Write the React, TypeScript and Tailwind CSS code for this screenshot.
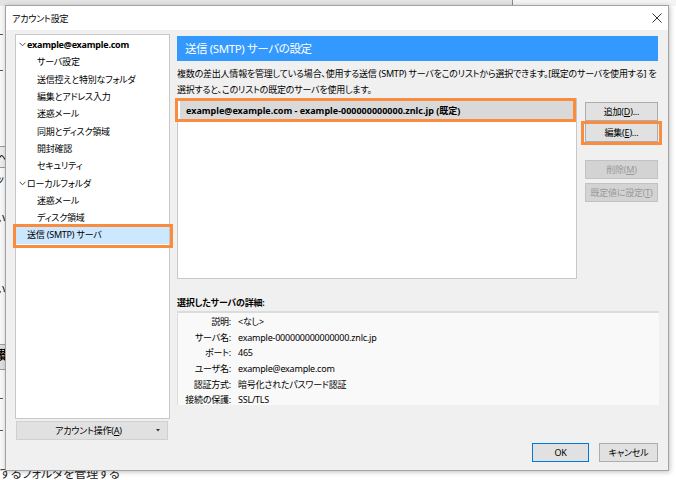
import type { ReactNode } from "react";

type TreeItem = {
  label: string;
  level: 0 | 1;
  bold?: boolean;
  chevron?: boolean;
  selected?: boolean;
};

const tree: TreeItem[] = [
  { label: "example@example.com", level: 0, bold: true, chevron: true },
  { label: "サーバ設定", level: 1 },
  { label: "送信控えと特別なフォルダ", level: 1 },
  { label: "編集とアドレス入力", level: 1 },
  { label: "迷惑メール", level: 1 },
  { label: "同期とディスク領域", level: 1 },
  { label: "開封確認", level: 1 },
  { label: "セキュリティ", level: 1 },
  { label: "ローカルフォルダ", level: 0, chevron: true },
  { label: "迷惑メール", level: 1 },
  { label: "ディスク領域", level: 1 },
  { label: "送信 (SMTP) サーバ", level: 0, selected: true },
];

const details: [string, string][] = [
  ["説明:", "<なし>"],
  ["サーバ名:", "example-000000000000000.znlc.jp"],
  ["ポート:", "465"],
  ["ユーザ名:", "example@example.com"],
  ["認証方式:", "暗号化されたパスワード認証"],
  ["接続の保護:", "SSL/TLS"],
];

function Chevron() {
  return (
    <svg width="7" height="5" viewBox="0 0 7 5" className="shrink-0">
      <path d="M0.5 0.8 L3.5 3.8 L6.5 0.8" fill="none" stroke="#4a4a4a" strokeWidth="1" />
    </svg>
  );
}

function Highlight({ className }: { className: string }) {
  return <span className={`pointer-events-none absolute border-[3px] border-[#f98c3f] ${className}`} />;
}

function SideButton({ children, disabled }: { children: ReactNode; disabled?: boolean }) {
  return (
    <div
      className={
        disabled
          ? "flex h-[19px] w-[73px] items-center justify-center border border-[#c2c2c2] bg-[#d3d3d3] text-[#9a9a9a]"
          : "flex h-[19px] w-[73px] items-center justify-center border border-[#adadad] bg-[#e1e1e1]"
      }
    >
      {children}
    </div>
  );
}

export default function App() {
  return (
    <div className="relative h-[480px] w-[676px] overflow-hidden bg-white font-['Noto_Sans','Noto_Sans_CJK_JP',sans-serif] text-[9px] leading-none tracking-[-0.22px] text-black [font-feature-settings:'palt']">
      {/* window behind the dialog */}
      <div className="flex h-[6px]">
        <div className="w-[513px] border-r border-[#8c8c8c] bg-[#e4e4e4]" />
        <div className="flex-1 bg-[#f4f4f4]" />
      </div>
      <div className="absolute left-0 top-[6px] h-[466px] w-[5px] bg-[#f7f7f7]">
        <span className="absolute left-0 top-[28px] h-px w-[3px] bg-[#555]" />
        <span className="absolute left-0 top-[64px] h-px w-[3px] bg-[#555]" />
        <span className="absolute left-0 top-[140px] h-[22px] w-[5px] border-y border-[#9a9a9a] bg-[#ececec]" />
        <span className="absolute left-[-3px] top-[146px] text-[11px]">へ</span>
        <span className="absolute left-[-4px] top-[168px] text-[10px]">ッ</span>
        <span className="absolute left-[-5px] top-[207px] text-[11px]">い</span>
        <span className="absolute left-[-5px] top-[278px] text-[11px]">い</span>
        <span className="absolute left-0 top-[338px] h-[26px] w-[5px] border-y border-[#9a9a9a] bg-[#dedede]" />
        <span className="absolute left-[-5px] top-[344px] text-[12px] font-bold">讃</span>
        <span className="absolute left-0 top-[392px] h-px w-[3px] bg-[#555]" />
        <span className="absolute left-0 top-[424px] h-px w-[3px] bg-[#555]" />
      </div>
      <div className="absolute left-0 top-[467px] text-[12px] leading-[14px] tracking-normal text-[#222]">
        するフォルダを管理する
      </div>

      {/* dialog */}
      <div className="absolute left-[5px] top-[5px] flex h-[466px] w-[664px] flex-col border border-[#a3a3a3] bg-[#f0f0f0] shadow-[1px_1px_5px_rgba(0,0,0,0.25)]">
        <div className="flex h-[24px] items-center justify-between bg-white pl-[6px] pr-[6px]">
          <span>アカウント設定</span>
          <svg width="10" height="10" viewBox="0 0 10 10">
            <path d="M0.5 0.5 L9.5 9.5 M9.5 0.5 L0.5 9.5" stroke="#333" strokeWidth="1" />
          </svg>
        </div>

        <div className="flex gap-[7px] pl-[9px] pt-[4px]">
          {/* left column */}
          <div className="flex w-[155px] flex-col">
            <div className="h-[385px] border border-[#c8c8c8] bg-white py-px">
              {tree.map((item, i) => (
                <div
                  key={i}
                  className={`relative flex h-[17.3px] items-center ${item.selected ? "bg-[#cce8ff]" : ""} ${
                    item.level === 0 ? "pl-[3px]" : "pl-[21px]"
                  }`}
                >
                  {item.level === 0 && (
                    <span className="flex w-[8px] items-center">{item.chevron && <Chevron />}</span>
                  )}
                  <span className={`whitespace-nowrap ${item.bold ? "font-bold" : ""}`}>{item.label}</span>
                  {item.selected && <Highlight className="-bottom-[4px] -left-[3px] -right-[4px] -top-[2px]" />}
                </div>
              ))}
            </div>
            <div className="ml-px mt-[2px] flex h-[19px] w-[152px] items-center border border-[#d0d0d0] bg-[#e1e1e1]">
              <span className="flex-1 pl-[4px] text-center">
                アカウント操作(<u>A</u>)
              </span>
              <svg width="4" height="3" viewBox="0 0 4 3" className="mr-[7px]">
                <path d="M0 0 H4 L2 2.5 Z" fill="#333" />
              </svg>
            </div>
          </div>

          {/* right column */}
          <div className="mt-[2px] flex w-[481px] flex-col">
            <div className="flex h-[25px] items-center bg-[#3399ff] pl-[8px] text-[11.5px] tracking-[-0.4px] text-white">
              送信 (SMTP) サーバの設定
            </div>
            <p className="mt-[5px] whitespace-nowrap leading-[16px]">
              複数の差出人情報を管理している場合、使用する送信 (SMTP) サーバをこのリストから選択できます。[既定のサーバを使用する] を
              <br />
              選択すると、このリストの既定のサーバを使用します。
            </p>

            <div className="flex gap-[8px]">
              <div className="h-[181px] w-[400px] border border-[#c8c8c8] bg-white p-[2px]">
                <div className="relative flex h-[18px] items-center bg-[#d9d9d9] pl-[6px] font-bold tracking-normal">
                  example@example.com - example-000000000000.znlc.jp (既定)
                  <Highlight className="-bottom-[3px] -left-[5px] -right-[2px] -top-[3px]" />
                </div>
              </div>
              <div className="flex flex-col pt-[4px]">
                <SideButton>
                  追加(<u>D</u>)...
                </SideButton>
                <div className="relative mt-[2px]">
                  <SideButton>
                    編集(<u>E</u>)...
                  </SideButton>
                  <Highlight className="-bottom-[3px] -left-[4px] -right-[4px] -top-[2px]" />
                </div>
                <div className="mt-[18px]">
                  <SideButton disabled>
                    削除(<u>M</u>)
                  </SideButton>
                </div>
                <div className="mt-[4px]">
                  <SideButton disabled>
                    既定値に設定(<u>T</u>)
                  </SideButton>
                </div>
              </div>
            </div>

            <div className="mt-[16px] h-[16px] font-semibold leading-[16px]">選択したサーバの詳細:</div>
            <div className="h-[94px] w-[482px] border-l border-t-2 border-[#dcdcdc] bg-[#f9f9f9] pt-px">
              {details.map(([label, value]) => (
                <div key={label} className="flex h-[15.6px] items-center">
                  <span className="w-[53px] shrink-0 whitespace-nowrap text-right">{label}</span>
                  <span className="ml-[7px] whitespace-nowrap">{value}</span>
                </div>
              ))}
            </div>

            <div className="mt-[38px] flex justify-end gap-[10px]">
              <div className="flex h-[19px] w-[57px] items-center justify-center border border-[#0078d7] bg-[#e1e1e1]">
                OK
              </div>
              <div className="flex h-[19px] w-[59px] items-center justify-center border border-[#adadad] bg-[#e1e1e1]">
                キャンセル
              </div>
            </div>
          </div>
        </div>
      </div>
    </div>
  );
}
